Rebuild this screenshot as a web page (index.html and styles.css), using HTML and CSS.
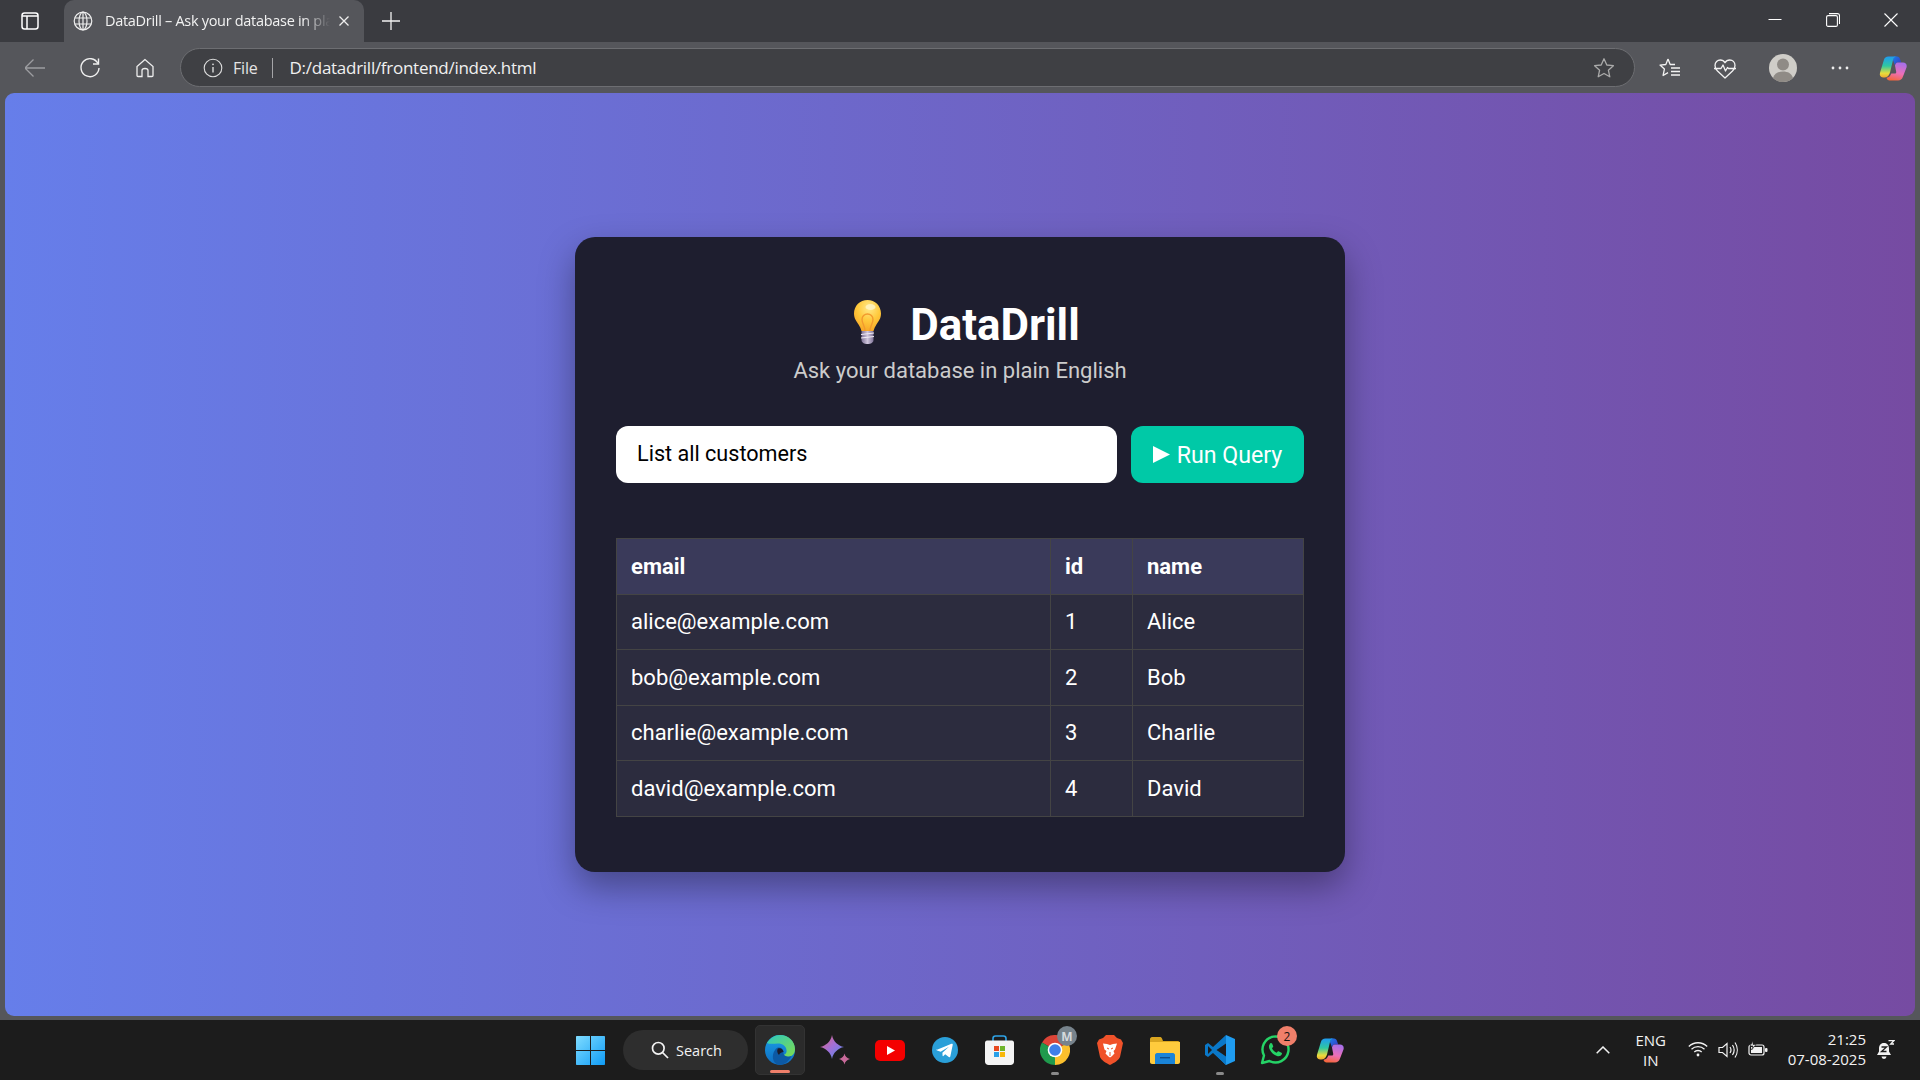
FILE: index.html
```html
<!DOCTYPE html>
<html lang="en">
<head>
<meta charset="utf-8">
<title>DataDrill – Ask your database in plain English</title>
<link rel="stylesheet" href="styles.css">
</head>
<body>
<svg class="defs" aria-hidden="true">
  <defs>
    <linearGradient id="copA" x1="0.3" y1="0" x2="0.3" y2="1"><stop offset="0" stop-color="#1f9bf0"/><stop offset=".45" stop-color="#2fc8a0"/><stop offset=".8" stop-color="#e8dc3c"/><stop offset="1" stop-color="#f0a830"/></linearGradient>
    <linearGradient id="copB" x1="0.6" y1="0" x2="0.3" y2="1"><stop offset="0" stop-color="#a86fe8"/><stop offset=".55" stop-color="#ec6fb8"/><stop offset="1" stop-color="#f5663a"/></linearGradient>
    <linearGradient id="copC" x1="0" y1="0" x2="1" y2="1"><stop offset="0" stop-color="#1c7ce8"/><stop offset="1" stop-color="#3a35c0"/></linearGradient>
    <symbol id="copilot" viewBox="0 0 28 28">
      <path d="M15 2.500h3c1.600 0 2.600 1 3 2.500l1.200 3.500H18.500c-1.300 0-2 1-2.500 3L14 6c.2-1.500.5-2.800 1-3.500z" fill="url(#copC)"/>
      <path d="M9.500 2.500H18C15.500 2.500 14.500 4 14 6L11 18.500C10.300 21 8.500 23.500 6 23.500H4C1.500 23.500.3 21.500 1 18.800L4.800 6.200C5.500 3.800 7 2.500 9.500 2.500z" fill="url(#copA)"/>
      <path d="M18.500 8.500H24c2.800 0 4.300 2.200 3.500 5L23.800 23c-.8 2-2.400 3.500-4.800 3.500H10.500c-1.500 0-2.500-1-3-2.700 2.500-.3 4-2 4.800-4.300h3.700c.8 0 1-.4 1.300-1.300L16 11.500c.3-1.500 1.300-3 2.500-3z" fill="url(#copB)"/>
    </symbol>
  </defs>
</svg>

<header class="tabstrip">
  <div class="sidebtn">
    <svg width="18" height="18" viewBox="0 0 18 18" fill="none" stroke="#fff" stroke-width="1.500"><rect x="1" y="1" width="16" height="16" rx="2.500"/><path d="M6 4v13M1 4h16" /></svg>
  </div>
  <div class="tab">
    <svg width="20" height="20" viewBox="0 0 20 20" fill="none" stroke="#eee" stroke-width="1.200"><circle cx="10" cy="10" r="8.800"/><ellipse cx="10" cy="10" rx="4" ry="8.800"/><path d="M1.800 7h16.400M1.800 13h16.400M10 1.200v17.600"/></svg>
    <span class="tabtitle">DataDrill – Ask your database in plain English</span>
    <svg width="12" height="12" viewBox="0 0 12 12" stroke="#eee" stroke-width="1.300"><path d="M1.500 1.500l9 9M10.500 1.500l-9 9"/></svg>
  </div>
  <div class="newtab">
    <svg width="18" height="18" viewBox="0 0 18 18" stroke="#f2f2f2" stroke-width="1.300"><path d="M9 0v18M0 9h18"/></svg>
  </div>
  <div class="winctl">
    <div class="winbtn"><svg width="14" height="14" viewBox="0 0 14 14" stroke="#fff" stroke-width="1"><path d="M.5 6.500h13"/></svg></div>
    <div class="winbtn"><svg width="14" height="14" viewBox="0 0 14 14" fill="none" stroke="#fff" stroke-width="1.100"><rect x=".6" y="2.600" width="10.800" height="10.800" rx="1.500"/><path d="M3 .6h8.500c1.100 0 2 .9 2 2V11"/></svg></div>
    <div class="winbtn"><svg width="14" height="14" viewBox="0 0 14 14" stroke="#fff" stroke-width="1.100"><path d="M.5.500l13 13M13.500.500l-13 13"/></svg></div>
  </div>
</header>

<nav class="toolbar">
  <div class="navbtn"><svg width="20" height="20" viewBox="0 0 20 20" fill="none" stroke="#9c9da1" stroke-width="1.300"><path d="M0 10h20M8.500 1.500L0 10l8.500 8.500"/></svg></div>
  <div class="navbtn"><svg width="22" height="22" viewBox="0 0 22 22" fill="none" stroke="#f0f0f0" stroke-width="1.400"><path d="M19 6.500A9 9 0 1 0 20 11"/><path d="M19.500 1.500v5.500H14"/></svg></div>
  <div class="navbtn"><svg width="20" height="20" viewBox="0 0 20 20" fill="none" stroke="#eee" stroke-width="1.300"><path d="M10 1.500L2 8.500v9c0 .7.5 1 1 1h4v-6c0-1 .8-2 3-2s3 1 3 2v6h4c.5 0 1-.3 1-1v-9z"/></svg></div>
  <div class="omnibox">
    <svg class="infoicon" width="20" height="20" viewBox="0 0 20 20" fill="none" stroke="#ddd" stroke-width="1.100"><circle cx="10" cy="10" r="8.800"/><path d="M10 9v5.500" stroke-width="1.400"/><circle cx="10" cy="6.300" r=".9" fill="#ddd" stroke="none"/></svg>
    <span class="scheme">File</span>
    <span class="omnisep"></span>
    <span class="url">D:/datadrill/frontend/index.html</span>
    <svg class="omnistar" width="22" height="22" viewBox="0 0 22 22" fill="none" stroke="#aaa" stroke-width="1.300" stroke-linejoin="round"><path d="M11 1.800l2.800 6.200 6.600.7-5 4.500 1.400 6.600L11 16.500l-5.800 3.300 1.400-6.600-5-4.500 6.600-.7z"/></svg>
  </div>
  <div class="tools">
    <div class="toolbtn"><svg width="22" height="22" viewBox="0 0 22 22" fill="none" stroke="#f2f2f2" stroke-width="1.300" stroke-linejoin="round"><path d="M9 2l2.200 5.500H16M9 2L6.800 7.500l-5.800.6 4.400 4-1.300 6.400L9 15.600"/><path d="M12 11h9M12 14.500h9M12 18h9"/></svg></div>
    <div class="toolbtn"><svg width="22" height="22" viewBox="0 0 22 22" fill="none" stroke="#f2f2f2" stroke-width="1.300" stroke-linejoin="round"><path d="M3.500 14C1.600 12 1 10.500 1 8.500 1 5 3.500 3 6.200 3 8.300 3 10 4 11 5.800 12 4 13.700 3 15.800 3 18.500 3 21 5 21 8.500c0 2-.6 3.500-2.500 5.500L11 21z"/><path d="M0 11.500h7l2-3.500 2.500 6 2-3.500 1 1h7.500"/></svg></div>
    <div class="toolbtn toolbtn-avatar"><svg width="28" height="28" viewBox="0 0 28 28"><circle cx="14" cy="14" r="14" fill="#cfcdc8"/><circle cx="14" cy="10.500" r="6" fill="#8f8b86"/><path d="M4 24c1.500-4.500 5-6.500 10-6.500S22.500 19.500 24 24c-2.500 2.500-6 4-10 4s-7.500-1.500-10-4z" fill="#8f8b86"/></svg></div>
    <div class="toolbtn toolbtn-more"><svg width="18" height="4" viewBox="0 0 18 4" fill="#eee"><circle cx="2" cy="2" r="1.400"/><circle cx="9" cy="2" r="1.400"/><circle cx="16" cy="2" r="1.400"/></svg></div>
    <div class="toolbtn toolbtn-copilot"><svg width="28" height="28"><use href="#copilot"/></svg></div>
  </div>
</nav>

<main class="viewport">
  <section class="card">
    <h1 class="title">
      <svg class="bulb" width="27" height="44" viewBox="0 0 27 44">
        <defs>
          <radialGradient id="bulbGlow" cx=".55" cy=".25" r=".75"><stop offset="0" stop-color="#ffe98a"/><stop offset=".55" stop-color="#ffc93c"/><stop offset="1" stop-color="#f7a928"/></radialGradient>
          <linearGradient id="bulbBase" x1="0" y1="0" x2="1" y2="0"><stop offset="0" stop-color="#7e7296"/><stop offset=".5" stop-color="#cfc6dc"/><stop offset="1" stop-color="#7e7296"/></linearGradient>
        </defs>
        <path d="M13.500 0C6 0 0 5.800 0 13.500c0 5 2.600 8 4.700 11.200 1.300 2 2.200 4 2.800 6.300h12c.6-2.300 1.500-4.300 2.800-6.300C24.400 21.500 27 18.500 27 13.500 27 5.800 21 0 13.500 0z" fill="url(#bulbGlow)"/>
        <ellipse cx="16.500" cy="7" rx="5" ry="3" fill="#fff4c4" opacity=".85"/>
        <path d="M11 31c0-5-3-7.500-3-11.500a5.500 5.500 0 0 1 11 0c0 4-3 6.500-3 11.500" fill="none" stroke="#f29a2e" stroke-width="1.400"/>
        <path d="M7.500 31h12v9c0 2.500-2.500 4-6 4s-6-1.500-6-4z" fill="url(#bulbBase)"/>
        <path d="M7 34.500l13-1.500M7 38l13-1.500" stroke="#f1edf5" stroke-width="1"/>
      </svg>
      <span class="titletext">DataDrill</span>
    </h1>
    <p class="subtitle">Ask your database in plain English</p>
    <form class="queryrow">
      <input class="queryinput" type="text" value="List all customers">
      <button class="runbtn" type="button">
        <svg width="17" height="17" viewBox="0 0 17 17" fill="#fff"><path d="M0 0l17 8.500L0 17z"/></svg>
        <span>Run Query</span>
      </button>
    </form>
    <table class="results">
      <colgroup><col class="colemail"><col class="colid"><col class="colname"></colgroup>
      <thead><tr><th>email</th><th>id</th><th>name</th></tr></thead>
      <tbody>
        <tr><td>alice@example.com</td><td>1</td><td>Alice</td></tr>
        <tr><td>bob@example.com</td><td>2</td><td>Bob</td></tr>
        <tr><td>charlie@example.com</td><td>3</td><td>Charlie</td></tr>
        <tr><td>david@example.com</td><td>4</td><td>David</td></tr>
      </tbody>
    </table>
  </section>
</main>

<footer class="taskbar">
  <svg class="startlogo" width="29" height="29" viewBox="0 0 29 29">
    <defs><linearGradient id="winBlue" x1="0" y1="0" x2="1" y2="1"><stop offset="0" stop-color="#7fdcff"/><stop offset="1" stop-color="#0f9bf5"/></linearGradient></defs>
    <path d="M1 0h13v14H0V1c0-.6.4-1 1-1zM15 0h13c.6 0 1 .4 1 1v13H15zM0 15h14v14H1c-.6 0-1-.4-1-1zM15 15h14v13c0 .6-.4 1-1 1H15z" fill="url(#winBlue)"/>
  </svg>
  <div class="searchpill">
    <svg width="18" height="18" viewBox="0 0 18 18" fill="none" stroke="#f4f4f4" stroke-width="1.700"><circle cx="7.300" cy="7.300" r="5.800"/><path d="M11.500 11.500l5.500 5.500"/></svg>
    <span>Search</span>
  </div>
  <div class="apps">
    <div class="app app-active">
      <svg width="30" height="30" viewBox="0 0 30 30">
        <defs>
          <linearGradient id="edgeA" x1="0" y1="0" x2="1" y2="1"><stop offset="0" stop-color="#2cc8c0"/><stop offset="1" stop-color="#7fdc4e"/></linearGradient>
          <linearGradient id="edgeB" x1="0" y1="0" x2="0" y2="1"><stop offset="0" stop-color="#1aa0e8"/><stop offset="1" stop-color="#0f6cc0"/></linearGradient>
        </defs>
        <circle cx="15" cy="15" r="15" fill="url(#edgeB)"/>
        <path d="M2 8C5 3 10 0 15 0c8 0 15 6 15 14 0 3-1 5-3 6.500-2.500 1.800-7 1.500-8.500-.5 2.500-.8 3.500-3 3-5C21 11 17.500 8.500 13 8.500 8.500 8.500 5 9.500 2 8z" fill="url(#edgeA)"/>
        <path d="M12 13c2.500-1.500 6 .5 6.500 3.500-1 4 3.500 6.500 8 4.500C24 26 19.500 30 14 30c-3.500-1-5.500-3.500-6-6.500-.6-4 1-8.500 4-10.500z" fill="#0c59a4"/>
        <path d="M13 13.500c3-1.200 5.500 1 5.500 3.500-2 .3-4 1.300-4.500 3-1.500-1.500-2.500-4.500-1-6.500z" fill="#1c1c2a"/>
      </svg>
      <span class="activebar"></span>
    </div>
    <div class="app">
      <svg width="30" height="30" viewBox="0 0 30 30">
        <defs><linearGradient id="gemA" x1="0" y1="0" x2="1" y2="1"><stop offset="0" stop-color="#e8627a"/><stop offset=".5" stop-color="#a070d8"/><stop offset="1" stop-color="#4a8ee8"/></linearGradient></defs>
        <path d="M12 0c1 6 6 11 12 12-6 1-11 6-12 12-1-6-6-11-12-12C6 11 11 6 12 0z" fill="url(#gemA)"/>
        <path d="M24.500 18.500c.4 2.800 2.700 5 5.500 5.500-2.800.5-5.100 2.700-5.500 5.500-.4-2.800-2.700-5-5.500-5.500 2.800-.5 5.100-2.700 5.500-5.500z" fill="#c86a9a"/>
      </svg>
    </div>
    <div class="app">
      <svg width="30" height="21" viewBox="0 0 30 21"><rect width="30" height="21" rx="5" fill="#f40000"/><path d="M12 6l8 4.500-8 4.500z" fill="#fff"/></svg>
    </div>
    <div class="app">
      <svg width="26" height="26" viewBox="0 0 26 26"><circle cx="13" cy="13" r="13" fill="#2a9fd8"/><path d="M5 12.800l14.500-6c.8-.3 1.400.2 1.200 1.100l-2.400 11.500c-.2.800-.8 1-1.500.6l-3.600-2.700-1.800 1.700c-.4.400-.8.200-.8-.3l-.2-3 6.500-6-8.200 5-3.600-1.200c-.8-.3-.8-.9-.1-1.200z" fill="#fff"/></svg>
    </div>
    <div class="app">
      <svg width="29" height="30" viewBox="0 0 29 30">
        <path d="M8 6V3.500C8 1.800 9 1 10.500 1h8C20 1 21 1.800 21 3.500V6" fill="none" stroke="#2ea3e6" stroke-width="1.600"/>
        <path d="M2 5.500h25c1 0 2 1 2 2v19c0 2-1.500 3.500-3.500 3.500h-22C1.500 30 0 28.500 0 26.500v-19c0-1 1-2 2-2z" fill="#f4f4f4"/>
        <rect x="9" y="11" width="5" height="5" fill="#e8491f"/><rect x="15" y="11" width="5" height="5" fill="#6fb52c"/><rect x="9" y="17" width="5" height="5" fill="#2aa0e8"/><rect x="15" y="17" width="5" height="5" fill="#f9b80a"/>
      </svg>
    </div>
    <div class="app">
      <svg width="30" height="30" viewBox="0 0 30 30">
        <path d="M15 15L2 7.500A15 15 0 0 1 28 7.500z" fill="#db4437"/>
        <path d="M15 15L2 7.500A15 15 0 0 0 15 30z" fill="#1f9a4d"/>
        <path d="M15 15l13-7.500A15 15 0 0 1 15 30z" fill="#fbc02d"/>
        <circle cx="15" cy="15" r="7.300" fill="#fff"/><circle cx="15" cy="15" r="5.800" fill="#3f7fe8"/>
      </svg>
      <span class="profilebadge">M</span>
      <span class="openpip"></span>
    </div>
    <div class="app">
      <svg width="26" height="30" viewBox="0 0 26 30">
        <path d="M13 30C9 28 4 25 3 22L0 8l2-3.500L6 3l3-3h8l3 3 4 1.500L26 8l-3 14c-1 3-6 6-10 8z" fill="#f0522a"/>
        <path d="M6 8.500l4 .5 3 1 3-1 4-.5-2 6-1.500 1.500 1 2.500-3 3-1.500 1-1.500-1-3-3 1-2.500L7.500 14.500z" fill="#fff"/>
        <path d="M13 17v4M10 13l2 1M16 13l-2 1" stroke="#f0522a" stroke-width="1"/>
      </svg>
    </div>
    <div class="app">
      <svg width="30" height="27" viewBox="0 0 30 27">
        <path d="M0 2c0-1 1-2 2-2h8c1 0 1.500.5 2 1.500L13 4h15c1 0 2 1 2 2v3H0z" fill="#d9a520"/>
        <path d="M0 5h30v20c0 1-1 2-2 2H2c-1 0-2-1-2-2z" fill="#ffcb3d"/>
        <path d="M5 18c0-1 1-2 2-2h16c1 0 2 1 2 2v9H5z" fill="#1a84d8"/>
        <rect x="10" y="20" width="10" height="1.400" fill="#0e4e8c"/>
      </svg>
    </div>
    <div class="app">
      <svg width="30" height="30" viewBox="0 0 30 30">
        <path d="M21 0l9 4v22l-9 4-12-12 12-9z" fill="#1f9cf0"/>
        <path d="M21 0v30L8 18l-5 4-3-2v-10l3-2 5 4z" fill="#0a78c8"/>
        <path d="M21 8.500L11.500 15l9.500 6.500z" fill="#1c1c1c"/>
        <path d="M3 11v8l4-4z" fill="#1c1c1c"/>
      </svg>
      <span class="openpip"></span>
    </div>
    <div class="app">
      <svg width="30" height="30" viewBox="0 0 30 30" fill="none">
        <path d="M2 28l2-7.500A13 13 0 1 1 9.500 26z" stroke="#25d366" stroke-width="2.400" stroke-linejoin="round"/>
        <path d="M10.500 8.500c-1.500 1-2 3-1 5.500 1.500 3.500 4 6 7.500 7 2.500.6 4-.2 4.800-1.800.3-.6.200-1.200-.3-1.500l-2.500-1.300c-.5-.2-1-.2-1.300.2l-1 1.200c-2-.8-3.800-2.500-4.700-4.500l1-1.200c.3-.4.300-.8.100-1.200l-1-2.400c-.3-.6-1.800-.8-2.600 0z" fill="#25d366"/>
      </svg>
      <span class="notifybadge">2</span>
    </div>
    <div class="app"><svg width="28" height="28"><use href="#copilot"/></svg></div>
  </div>
  <div class="tray">
    <svg class="chevron" width="14" height="8" viewBox="0 0 14 8" fill="none" stroke="#f2f2f2" stroke-width="1.500"><path d="M.7 7.300L7 1l6.300 6.300"/></svg>
    <div class="lang"><span>ENG</span><span>IN</span></div>
    <div class="trayicons">
      <svg width="20" height="16" viewBox="0 0 20 16" fill="none" stroke="#f2f2f2" stroke-width="1.300"><path d="M.8 5.500c5-5 13.400-5 18.400 0M3.500 8.300c3.500-3.500 9.500-3.500 13 0M6.300 11c2-2 5.400-2 7.400 0"/><circle cx="10" cy="14" r="1.400" fill="#f2f2f2" stroke="none"/></svg>
      <svg width="20" height="18" viewBox="0 0 20 18" fill="none" stroke="#f2f2f2" stroke-width="1.200"><path d="M1 6.500h3.500L9 2.500v13l-4.500-4H1z"/><path d="M12 6c1.200 1.800 1.200 4.200 0 6M14.500 4c2 3 2 7 0 10M17 1.500c3 4.500 3 10.500 0 15"/></svg>
      <svg width="20" height="16" viewBox="0 0 20 16" fill="none"><rect x="1" y="4" width="15" height="10" rx="2" stroke="#f2f2f2" stroke-width="1.200"/><rect x="3" y="6" width="11" height="6" fill="#f2f2f2"/><rect x="17" y="7" width="2.500" height="4" rx="1" fill="#f2f2f2"/><path d="M5 0L2 5h3L3.500 9 8 3.500H5z" fill="#f2f2f2" stroke="#1c1c1c" stroke-width=".7"/></svg>
    </div>
    <div class="clock"><span>21:25</span><span>07-08-2025</span></div>
    <svg class="bell" width="20" height="20" viewBox="0 0 20 20" fill="#f2f2f2"><path d="M9 3c-3.500 0-5 2.500-5 5.500v3L2 15h14l-2-3.500v-3C14 5.500 12.500 3 9 3z"/><path d="M6.500 16.500h5a2.500 2.500 0 0 1-5 0z"/><path d="M13.500.500h5.500l-3.300 3.500H19" fill="none" stroke="#f2f2f2" stroke-width="1.300"/><path d="M6.500 7h5l-5 4.500h5" fill="none" stroke="#1c1c1c" stroke-width="1.300"/></svg>
  </div>
</footer>
</body>
</html>
```
FILE: styles.css
```css
* { box-sizing: border-box; }
html, body { margin: 0; height: 100%; }
body {
  display: flex;
  flex-direction: column;
  height: 100vh;
  overflow: hidden;
  background: #55565b;
  font-family: Roboto, sans-serif;
}
.defs { position: absolute; width: 0; height: 0; }

/* browser chrome */
.tabstrip {
  flex: 0 0 42px;
  display: flex;
  align-items: stretch;
  background: #3a3b40;
}
.sidebtn { flex: 0 0 64px; display: flex; align-items: center; justify-content: center; padding-right: 4px; }
.tab {
  flex: 0 0 300px;
  min-width: 0;
  display: flex;
  align-items: center;
  padding: 0 14px 0 9px;
  background: #55565b;
  border-radius: 10px 10px 0 0;
  color: #f2f2f2;
}
.tabtitle {
  flex: 1;
  min-width: 0;
  margin-left: 12px;
  margin-right: 8px;
  padding-bottom: 2px;
  overflow: hidden;
  white-space: nowrap;
  font: 14.500px "Open Sans", "Noto Sans", sans-serif;
  letter-spacing: -0.3px;
  -webkit-mask-image: linear-gradient(90deg, #000 88%, transparent 100%);
  mask-image: linear-gradient(90deg, #000 88%, transparent 100%);
}
.newtab { flex: 0 0 54px; display: flex; align-items: center; justify-content: center; }
.winctl { margin-left: auto; display: flex; }
.winbtn { width: 58px; display: flex; align-items: center; justify-content: center; padding-bottom: 2px; }

.toolbar {
  flex: 0 0 51px;
  display: flex;
  align-items: center;
  padding: 0 0 0 7px;
  background: #55565b;
}
.navbtn { flex: 0 0 55px; display: flex; align-items: center; justify-content: center; margin-top: 1px; }
.omnibox {
  flex: 0 0 1455px;
  height: 39px;
  margin-left: 8px;
  display: flex;
  align-items: center;
  padding: 0 19px 0 23px;
  border: 1.500px solid #6d6e72;
  border-radius: 20px;
  background: #3f4044;
  color: #f0f0f0;
  font: 16px "Open Sans", "Noto Sans", sans-serif;
  letter-spacing: -0.2px;
}
.infoicon { margin-left: -1px; }
.scheme { margin-left: 10px; color: #e4e4e4; }
.omnisep { width: 1px; height: 20px; margin: 0 17px 0 14px; background: #a5a5a8; }
.url { flex: 1; font-size: 17px; letter-spacing: -0.27px; }
.tools { display: flex; margin-left: 7px; }
.toolbtn { width: 55.500px; height: 40px; display: flex; align-items: center; justify-content: center; }
.toolbtn-avatar { margin-left: 2px; }
.toolbtn-more { margin-left: 2px; }
.toolbtn-copilot { margin-left: -3px; }

/* page */
.viewport {
  flex: 1;
  margin: 0 5px 4px;
  display: flex;
  align-items: center;
  justify-content: center;
  border-radius: 9px;
  background: linear-gradient(90deg, #667eea, #764ba2);
}
.card {
  flex: none;
  width: 770px;
  height: 635px;
  padding: 57px 41px 0;
  display: flex;
  flex-direction: column;
  background: #1e1e2f;
  border-radius: 20px;
  box-shadow: 0 15px 35px rgba(0, 0, 0, 0.35);
  color: #fff;
}
.card > * { flex: none; }
.title {
  margin: 0;
  height: 56px;
  padding-left: 14px;
  display: flex;
  align-items: center;
  justify-content: center;
  gap: 29px;
  font-size: 43.800px;
  font-weight: 700;
}
.titletext { padding-top: 5px; }
.subtitle {
  margin: 3px 0 0;
  height: 36px;
  line-height: 36px;
  text-align: center;
  font-size: 22px;
  color: #cccccc;
}
.queryrow {
  margin-top: 37px;
  display: flex;
  gap: 14px;
}
.queryinput {
  flex: 1;
  height: 57px;
  min-width: 0;
  padding: 0 21px 2px;
  border: 0;
  border-radius: 12px;
  background: #fff;
  color: #000;
  font: 21.600px Roboto, sans-serif;
  outline: none;
}
.runbtn {
  flex: 0 0 173px;
  height: 57px;
  display: flex;
  align-items: center;
  justify-content: center;
  gap: 7px;
  border: 0;
  border-radius: 12px;
  background: #00c9a7;
  color: #fff;
  font: 23.200px Roboto, sans-serif;
}
.results {
  margin-top: 55px;
  width: 687px;
  table-layout: fixed;
  border-collapse: collapse;
  font-size: 22px;
}
.colemail { width: 434px; }
.colid { width: 82px; }
.colname { width: 171px; }
.results th, .results td {
  height: 56px;
  padding: 0 14px;
  border: 1px solid #444;
  text-align: left;
}
.results tbody tr:nth-child(odd) td { height: 55px; padding-bottom: 2px; }
.results th { background: #3a3a5a; font-weight: 700; }
.results td { background: #2c2c3e; }

/* taskbar */
.taskbar {
  flex: 0 0 60px;
  display: flex;
  align-items: center;
  padding-left: 576px;
  background: #1c1c1c;
  color: #f2f2f2;
}
.startlogo { flex: none; }
.searchpill {
  flex: 0 0 125px;
  height: 40px;
  margin-left: 18px;
  padding-left: 2px;
  display: flex;
  align-items: center;
  justify-content: center;
  gap: 7px;
  border-radius: 20px;
  background: #2e2e2e;
  font: 14.500px "Open Sans", "Noto Sans", sans-serif;
}
.apps { display: flex; margin-left: 4px; }
.app {
  position: relative;
  width: 55px;
  height: 50px;
  display: flex;
  align-items: center;
  justify-content: center;
}
.app-active::before {
  content: "";
  position: absolute;
  left: 2.500px;
  right: 2.500px;
  top: 0;
  bottom: 0;
  border-radius: 5px;
  background: #2b2b2b;
  border: 1px solid #333;
}
.app svg { position: relative; }
.activebar {
  position: absolute;
  left: 17.500px;
  bottom: 2px;
  width: 20px;
  height: 3.500px;
  border-radius: 2px;
  background: #ef7f6a;
}
.openpip {
  position: absolute;
  left: 23.500px;
  bottom: 0;
  width: 8px;
  height: 3.500px;
  border-radius: 2px;
  background: #8a8a8a;
}
.profilebadge, .notifybadge {
  position: absolute;
  top: 1px;
  left: 30px;
  width: 20px;
  height: 20px;
  display: flex;
  align-items: center;
  justify-content: center;
  border-radius: 50%;
  font: 12px "Open Sans", sans-serif;
}
.profilebadge { background: #77838c; color: #d5d9dc; font-weight: 700; }
.notifybadge { background: #f07f6a; color: #111; }
.tray {
  margin-left: auto;
  display: flex;
  align-items: center;
  padding-right: 25px;
  font: 15px "Open Sans", "Noto Sans", sans-serif;
}
.lang { display: flex; flex-direction: column; align-items: center; margin-left: 25px; line-height: 20px; width: 32px; }
.trayicons { display: flex; gap: 10px; margin-left: 21px; }
.clock { display: flex; flex-direction: column; align-items: flex-end; margin-left: 20px; padding-bottom: 2px; line-height: 20px; }
.bell { margin-left: 9px; }
```
